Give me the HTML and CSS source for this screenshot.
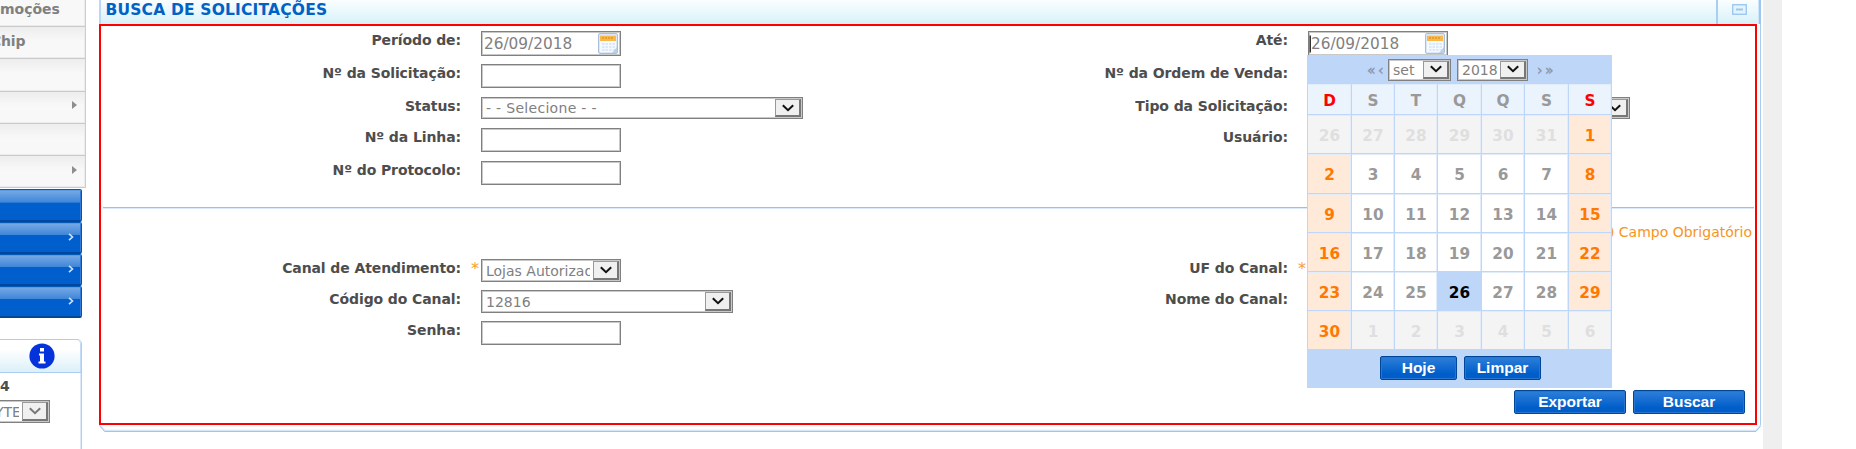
FILE: index.html
```html
<!DOCTYPE html>
<html lang="pt-BR">
<head>
<meta charset="utf-8">
<title>Busca de Solicitações</title>
<link rel="stylesheet" href="styles.css">
</head>
<body>
<svg class="defs" width="0" height="0">
  <defs>
    <symbol id="chev" viewBox="0 0 12 8"><path d="M0.8 1.2 L6 6.2 L11.2 1.2" fill="none" stroke="currentColor" stroke-width="2"/></symbol>
    <symbol id="cal" viewBox="0 0 20 21">
      <rect x=".5" y=".5" width="19" height="20" rx="1.5" fill="#d9e7f8" stroke="#a9c0dd"/>
      <rect x="2" y="2" width="16" height="17" fill="#f6faff"/>
      <rect x="2" y="2.500" width="16" height="5.500" fill="#f7b94c"/>
      <path d="M4 5H16" stroke="#e9a02c" stroke-width="2" stroke-dasharray="2 1"/>
      <path d="M4 11H17M4 14H17M4 17H17" stroke="#dbe8f7" stroke-width="2" stroke-dasharray="2.500 1"/>
      <path d="M14 20L19 14V20Z" fill="#b9cfea"/>
    </symbol>
  </defs>
</svg>
<div class="page">
  <aside class="side">
    <nav class="menu">
      <div class="item cut"><span class="promo">moções</span></div>
      <div class="item"><span class="chip">Chip</span></div>
      <div class="item"></div>
      <div class="item"><i class="tri"></i></div>
      <div class="item"></div>
      <div class="item"><i class="tri"></i></div>
    </nav>
    <nav class="blue">
      <div class="bitem"></div>
      <div class="bitem"><svg width="6" height="8" viewBox="0 0 6 8"><path d="M1 .8L4.500 4L1 7.200"/></svg></div>
      <div class="bitem"><svg width="6" height="8" viewBox="0 0 6 8"><path d="M1 .8L4.500 4L1 7.200"/></svg></div>
      <div class="bitem"><svg width="6" height="8" viewBox="0 0 6 8"><path d="M1 .8L4.500 4L1 7.200"/></svg></div>
    </nav>
    <section class="info">
      <div class="infohead">
        <svg width="26" height="26" viewBox="0 0 26 26"><circle cx="13" cy="13" r="12.600" fill="#0433dc"/><rect x="11" y="5" width="4" height="3.500" fill="#fff"/><path d="M10 10.500H15V18.500H16.500V20.500H9.500V18.500H11V12.500H10Z" fill="#fff"/></svg>
      </div>
      <b class="four">4</b>
      <div class="sel mini"><span>YTE</span><i class="btn"><svg><use href="#chev"/></svg></i></div>
    </section>
  </aside>
  <main class="panel">
    <header class="head">
      <h1>BUSCA DE SOLICITAÇÕES</h1>
      <div class="min"><svg width="15" height="11" viewBox="0 0 15 11"><rect x=".75" y=".75" width="13.500" height="9.500" fill="#e4f3fd" stroke="#96c4f0" stroke-width="1.300"/><rect x="4" y="4.500" width="7" height="2" fill="#9cc8f0"/></svg></div>
    </header>
    <div class="form">
      <div class="rows first">
        <label>Período de:</label><em></em><div class="inp date"><span>26/09/2018</span><svg class="calicon"><use href="#cal"/></svg></div>
        <label>Até:</label><em></em><div class="inp date focus"><span>26/09/2018</span><svg class="calicon"><use href="#cal"/></svg></div>
        <label>Nº da Solicitação:</label><em></em><div class="inp"></div>
        <label>Nº da Ordem de Venda:</label><em></em><div></div>
        <label>Status:</label><em></em><div class="sel wide"><span>- - Selecione - -</span><i class="btn"><svg><use href="#chev"/></svg></i></div>
        <label>Tipo da Solicitação:</label><em></em><div class="sel tipo"><span></span><i class="btn"><svg><use href="#chev"/></svg></i></div>
        <label>Nº da Linha:</label><em></em><div class="inp"></div>
        <label>Usuário:</label><em></em><div></div>
        <label>Nº do Protocolo:</label><em></em><div class="inp"></div>
      </div>
      <div class="rule"></div>
      <p class="note">(*) Campo Obrigatório</p>
      <div class="rows second">
        <label>Canal de Atendimento:</label><em>*</em><div class="sel tall"><span>Lojas Autorizadas</span><i class="btn"><svg><use href="#chev"/></svg></i></div>
        <label>UF do Canal:</label><em>*</em><div></div>
        <label>Código do Canal:</label><em></em><div class="sel tall code"><span>12816</span><i class="btn"><svg><use href="#chev"/></svg></i></div>
        <label>Nome do Canal:</label><em></em><div></div>
        <label>Senha:</label><em></em><div class="inp"></div>
      </div>
      <div class="actions"><button>Exportar</button><button>Buscar</button></div>
    </div>
    <svg class="foot" width="1663" height="8" viewBox="0 0 1663 8"><path d="M.5 0L6 5.500H1657L1662 0" fill="none" stroke="#d5e6f9" stroke-width="1.500"/><path d="M.5 .5L5.500 6.500H1657L1661.500 1" fill="none" stroke="#9fc5ef"/></svg>
  </main>
  <div class="strip"></div>
</div>
<div class="calendar">
  <div class="nav">
    <span class="arr">« ‹</span>
    <div class="sel month"><span>set</span><i class="btn"><svg><use href="#chev"/></svg></i></div>
    <div class="sel year"><span>2018</span><i class="btn"><svg><use href="#chev"/></svg></i></div>
    <span class="arr">› »</span>
  </div>
  <div class="days">
    <b class="wd red">D</b><b class="wd">S</b><b class="wd">T</b><b class="wd">Q</b><b class="wd">Q</b><b class="wd">S</b><b class="wd red">S</b>
    <b class="off">26</b><b class="off">27</b><b class="off">28</b><b class="off">29</b><b class="off">30</b><b class="off">31</b><b class="we">1</b>
    <b class="we">2</b><b>3</b><b>4</b><b>5</b><b>6</b><b>7</b><b class="we">8</b>
    <b class="we">9</b><b>10</b><b>11</b><b>12</b><b>13</b><b>14</b><b class="we">15</b>
    <b class="we">16</b><b>17</b><b>18</b><b>19</b><b>20</b><b>21</b><b class="we">22</b>
    <b class="we">23</b><b>24</b><b>25</b><b class="on">26</b><b>27</b><b>28</b><b class="we">29</b>
    <b class="we">30</b><b class="off">1</b><b class="off">2</b><b class="off">3</b><b class="off">4</b><b class="off">5</b><b class="off">6</b>
  </div>
  <div class="calfoot"><button>Hoje</button><button>Limpar</button></div>
</div>
</body>
</html>
```
FILE: styles.css
```css
* { box-sizing: border-box; }
body { margin: 0; width: 1856px; height: 449px; overflow: hidden; background: #fff; font-family: "DejaVu Sans", sans-serif; font-size: 14px; color: #4d4d4d; position: relative; }
.defs { position: absolute; }
.page { display: flex; height: 449px; }

.side { width: 99px; flex: none; overflow: hidden; height: 449px; }
.menu { width: 86px; border-right: 1px solid #cdcdcd; }
.item { height: 32.300px; border-bottom: 1px solid #cacaca; background: linear-gradient(#ededed, #f8f8f8 45%); box-shadow: inset -1px -1px 0 #ececec; display: flex; align-items: center; color: #808080; font-weight: bold; white-space: nowrap; }
.item.cut { height: 27px; background: #f8f8f8; }
.promo { line-height: 18px; margin-top: -9px; }
.chip { margin-left: -9px; margin-top: -3px; letter-spacing: -0.2px; }
.tri { margin: -4px 8px 0 auto; border-left: 5px solid #8e8e8e; border-top: 4px solid transparent; border-bottom: 4px solid transparent; }
.blue { width: 82px; margin-top: 1px; }
.bitem { height: 32.200px; border-top: 1px solid #0759b8; border-bottom: 2px solid #00479c; border-right: 1px solid #0050c0; border-radius: 0 2px 2px 0; background: linear-gradient(#78abe6, #3f86d8 41%, #005fcd 43%, #005fcd); box-shadow: inset 0 1px 0 #5b9be2, inset -1px 0 0 #3379d8; display: flex; justify-content: flex-end; align-items: center; padding: 0 7px 1px 0; }
.bitem svg { fill: none; stroke: #cfe3fa; stroke-width: 1.600; }
.info { margin-top: 21px; width: 82px; height: 140px; border: 1px solid #aecdf3; border-left: 0; border-top-right-radius: 5px; box-shadow: inset -1px 0 0 #dceafa; }
.infohead { height: 33px; border-bottom: 1px solid #aecdf3; background: linear-gradient(#fff 30%, #dbf0f9); border-top-right-radius: 4px; box-shadow: inset -1px 0 0 #c3dbf7; padding: 3px 0 0 28.500px; }
.infohead svg { display: block; }
.four { display: block; line-height: 18px; margin-top: 4px; height: 23px; font-size: 14px; }

.inp, .sel { border: 1px solid #808080; box-shadow: inset 0 0 0 1px #c9c9c9; background: #fff; color: #808080; }
.inp { width: 140px; height: 24px; }
.date { height: 25px; display: flex; align-items: center; justify-content: space-between; padding: 0 2px 0 2px; font-size: 15.300px; }
.calicon { width: 20px; height: 21px; margin-top: -1px; }
.focus span { box-shadow: -2px 0 0 -0.5px #333; }
.sel { width: 140px; height: 22px; display: flex; align-items: center; padding: 1px; font-size: 14px; }
.sel.tall, .mini { height: 23px; }
.sel span { flex: 1; overflow: hidden; white-space: nowrap; margin-right: 3px; padding-left: 3px; line-height: 18px; }
.sel .btn { width: 26px; flex: none; align-self: stretch; background: #f0f0f0; border: 1px solid #999; border-right: 2px solid #777; border-bottom: 2px solid #777; display: flex; align-items: center; justify-content: center; color: #111; }
.btn svg { width: 12px; height: 8px; display: block; }
.sel.wide { width: 322px; }
.wide span { letter-spacing: 0.3px; }
.sel.tipo { width: 322px; }
.sel.code { width: 252px; }
.sel.mini { width: 60px; margin-left: -10px; }
.mini .btn { color: #777; }

.panel { width: 1663px; flex: none; }
.head { height: 24px; display: flex; justify-content: space-between; border-left: 2px solid #bcd6f5; border-right: 2px solid #9dc5f2; width: 1662px; background: linear-gradient(#fafeff, #d8f1f9); }
h1 { margin: 1px 0 0 4.500px; font-size: 15.500px; letter-spacing: 0.180px; line-height: 18px; color: #0061c6; white-space: nowrap; }
.min { width: 43px; border-left: 2px solid #a9cdf3; padding: 3.500px 0 0 13.500px; box-shadow: inset -1px 0 0 #cfe5fa; }
.min svg { display: block; }
.form { width: 1658px; height: 401px; border: 2px solid #f00; box-shadow: 3px 0 0 #fff, 4px 0 0 #a9ccf3; padding-top: 5px; }
.rows { display: grid; grid-template-columns: 360px 20px 447px 360px 20px 1fr; }
.first { grid-template-rows: 33px 33px 31px 33px 24px; }
.second { grid-template-rows: 31px 31px 24px; }
label { text-align: right; font-weight: bold; line-height: 18px; white-space: nowrap; letter-spacing: -0.1px; }
em { font-style: normal; color: #f7a030; text-align: right; padding-right: 2px; line-height: 20px; font-size: 16px; height: 20px; }
.rule { height: 2px; margin: 22px 1px 0 2px; border-top: 1px solid #97c0ee; border-bottom: 1px solid #dbe9fa; }
.note { margin: 14px 3px 0; line-height: 18px; height: 36px; text-align: right; color: #f7941e; font-size: 14px; }
.actions { display: flex; justify-content: flex-end; gap: 7px; margin: 45px 10px 0 0; }
button { width: 112px; height: 24px; border: 1px solid #00479a; border-radius: 2px; background: linear-gradient(#2f7fd8, #005ecb 75%); box-shadow: inset 0 0 0 1px #2874d0; color: #fff; font: bold 15.500px "Liberation Sans", sans-serif; padding: 0; }
.foot { display: block; }
.strip { width: 19px; margin-left: 1px; background: #efefef; }

.calendar { position: absolute; left: 1307px; top: 55px; width: 305px; height: 333px; background: #bed6f8; }
.nav { height: 29px; display: flex; align-items: center; padding-left: 60px; }
.arr { color: #8794a8; font-size: 14px; width: 21px; white-space: nowrap; word-spacing: -2px; line-height: 18px; -webkit-text-stroke: 0.300px #8794a8; }
.sel.month { width: 63px; }
.sel.year { width: 71px; margin: 0 9px 0 6px; }
.days { display: grid; grid-template-columns: 44px 43px 43px 44px 43px 44px 43px; grid-template-rows: 31px 39px 40px 39px 39px 39px 39px; margin-left: 1px; }
.days b { border-right: 1px solid #bed6f8; border-bottom: 1px solid #bed6f8; box-shadow: inset -1px 1px 0 #e2edfc; background: #fff; color: #999; display: flex; align-items: center; justify-content: center; font-size: 15.300px; padding-top: 3px; }
.days .wd { background: #ebf3fd; padding-top: 3px; }
.days .red { color: #f00; }
.days .off { background: #f4f4f4; color: #dfdfdf; }
.days .we { background: #ffead9; color: #ff7800; }
.days .on { background: #bed6f8; color: #000; box-shadow: none; }
.calfoot { display: flex; gap: 7px; padding: 6px 0 0 73px; }
.calfoot button { width: 77px; }
```
